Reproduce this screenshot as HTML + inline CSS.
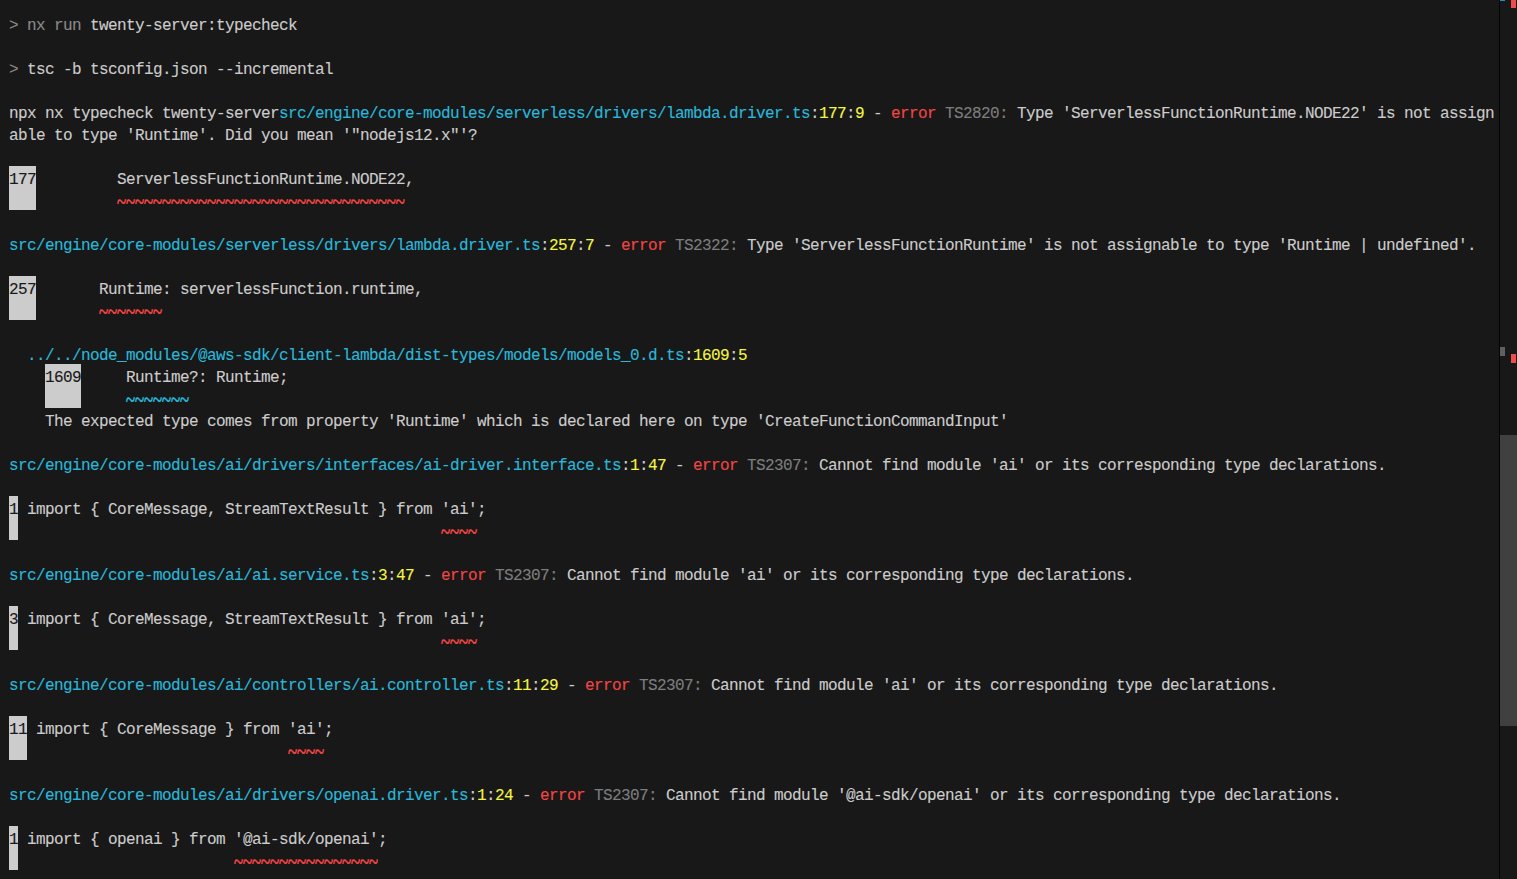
<!DOCTYPE html>
<html lang="en">
<head>
<meta charset="utf-8">
<title>Terminal - nx run twenty-server:typecheck</title>
<style>
html,body{margin:0;padding:0;}
body{width:1517px;height:879px;overflow:hidden;background:#181818;position:relative;}
#term{position:absolute;left:9px;top:15px;margin:0;
  font-family:"Liberation Mono","DejaVu Sans Mono",monospace;
  font-size:16px;letter-spacing:-0.6016px;line-height:22px;color:#cccccc;white-space:pre;
  font-kerning:none;font-variant-ligatures:none;-webkit-text-stroke:0.12px;}
.r{display:block;height:22px;line-height:22px;white-space:pre;}
.d{color:#8a8a8a;}
.c{color:#29b8db;}
.y{color:#f5f543;}
.e{color:#f24646;}
.g{color:#7e7e7e;}
.i{color:#181818;}
.t{display:inline-block;font-family:"Liberation Serif",serif;font-weight:bold;font-size:17.308px;letter-spacing:0;line-height:22px;transform-origin:0 9px;transform:translateY(0px) scaleY(1.3);}
.b{position:absolute;background:#cccccc;height:44px;}
#sb{position:absolute;left:1499px;top:0;width:18px;height:879px;}
#sb .ln{position:absolute;left:0;top:0;width:1px;height:879px;background:#030306;}
#sb .th{position:absolute;left:1px;top:435px;width:17px;height:291px;background:#404040;}
#sb .m{position:absolute;}
</style>
</head>
<body>
<div class="b" style="left:9px;top:166px;width:27px;"></div>
<div class="b" style="left:9px;top:276px;width:27px;"></div>
<div class="b" style="left:45px;top:364px;width:36px;"></div>
<div class="b" style="left:9px;top:496px;width:9px;"></div>
<div class="b" style="left:9px;top:606px;width:9px;"></div>
<div class="b" style="left:9px;top:716px;width:18px;"></div>
<div class="b" style="left:9px;top:826px;width:9px;"></div>
<div id="term"><span class="r"><span class="d">&gt; nx run</span> twenty-server:typecheck</span><span class="r"> </span><span class="r"><span class="d">&gt;</span> tsc -b tsconfig.json --incremental</span><span class="r"> </span><span class="r">npx nx typecheck twenty-server<span class="c">src/engine/core-modules/serverless/drivers/lambda.driver.ts</span>:<span class="y">177</span>:<span class="y">9</span> - <span class="e">error</span> <span class="g">TS2820: </span>Type 'ServerlessFunctionRuntime.NODE22' is not assign</span><span class="r">able to type 'Runtime'. Did you mean '"nodejs12.x"'?</span><span class="r"> </span><span class="r"><span class="i">177</span>         ServerlessFunctionRuntime.NODE22,</span><span class="r"><span class="i">   </span>         <span class="e t">~~~~~~~~~~~~~~~~~~~~~~~~~~~~~~~~</span></span><span class="r"> </span><span class="r"><span class="c">src/engine/core-modules/serverless/drivers/lambda.driver.ts</span>:<span class="y">257</span>:<span class="y">7</span> - <span class="e">error</span> <span class="g">TS2322: </span>Type 'ServerlessFunctionRuntime' is not assignable to type 'Runtime | undefined'.</span><span class="r"> </span><span class="r"><span class="i">257</span>       Runtime: serverlessFunction.runtime,</span><span class="r"><span class="i">   </span>       <span class="e t">~~~~~~~</span></span><span class="r"> </span><span class="r">  <span class="c">../../node_modules/@aws-sdk/client-lambda/dist-types/models/models_0.d.ts</span>:<span class="y">1609</span>:<span class="y">5</span></span><span class="r">    <span class="i">1609</span>     Runtime?: Runtime;</span><span class="r">    <span class="i">    </span>     <span class="c t">~~~~~~~</span></span><span class="r">    The expected type comes from property 'Runtime' which is declared here on type 'CreateFunctionCommandInput'</span><span class="r"> </span><span class="r"><span class="c">src/engine/core-modules/ai/drivers/interfaces/ai-driver.interface.ts</span>:<span class="y">1</span>:<span class="y">47</span> - <span class="e">error</span> <span class="g">TS2307: </span>Cannot find module 'ai' or its corresponding type declarations.</span><span class="r"> </span><span class="r"><span class="i">1</span> import { CoreMessage, StreamTextResult } from 'ai';</span><span class="r"><span class="i"> </span>                                               <span class="e t">~~~~</span></span><span class="r"> </span><span class="r"><span class="c">src/engine/core-modules/ai/ai.service.ts</span>:<span class="y">3</span>:<span class="y">47</span> - <span class="e">error</span> <span class="g">TS2307: </span>Cannot find module 'ai' or its corresponding type declarations.</span><span class="r"> </span><span class="r"><span class="i">3</span> import { CoreMessage, StreamTextResult } from 'ai';</span><span class="r"><span class="i"> </span>                                               <span class="e t">~~~~</span></span><span class="r"> </span><span class="r"><span class="c">src/engine/core-modules/ai/controllers/ai.controller.ts</span>:<span class="y">11</span>:<span class="y">29</span> - <span class="e">error</span> <span class="g">TS2307: </span>Cannot find module 'ai' or its corresponding type declarations.</span><span class="r"> </span><span class="r"><span class="i">11</span> import { CoreMessage } from 'ai';</span><span class="r"><span class="i">  </span>                             <span class="e t">~~~~</span></span><span class="r"> </span><span class="r"><span class="c">src/engine/core-modules/ai/drivers/openai.driver.ts</span>:<span class="y">1</span>:<span class="y">24</span> - <span class="e">error</span> <span class="g">TS2307: </span>Cannot find module '@ai-sdk/openai' or its corresponding type declarations.</span><span class="r"> </span><span class="r"><span class="i">1</span> import { openai } from '@ai-sdk/openai';</span><span class="r"><span class="i"> </span>                        <span class="e t">~~~~~~~~~~~~~~~~</span></span></div>
<div id="sb">
  <div class="ln"></div>
  <div class="th"></div>
  <div class="m" style="left:1px;top:0;width:5px;height:1px;background:#1c93c4;"></div>
  <div class="m" style="left:12px;top:0;width:5px;height:8px;background:#f14c4c;"></div>
  <div class="m" style="left:1px;top:347px;width:5px;height:9px;background:#606060;"></div>
  <div class="m" style="left:12px;top:354px;width:5px;height:9px;background:#f14c4c;"></div>
</div>
</body>
</html>
